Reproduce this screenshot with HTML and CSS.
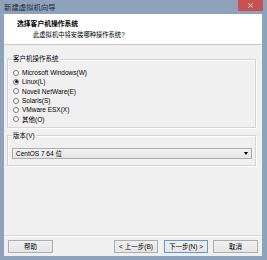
FILE: index.html
```
<!DOCTYPE html>
<html lang="zh-CN">
<head>
    <meta charset="UTF-8">
    <meta name="viewport" content="width=device-width, initial-scale=1.0">
    <title>新建虚拟机向导</title>
    <link rel="stylesheet" href="styles.css">
</head>
<body>
    <div class="window">
        <div class="title-bar">
            <span class="title-text">新建虚拟机向导</span>
            <span class="close-btn">
                <svg width="5" height="5" viewBox="0 0 5 5"><path d="M0.5 0.5 L4.5 4.5 M4.5 0.5 L0.5 4.5" stroke="#fff" stroke-width="1"/></svg>
            </span>
        </div>
        <div class="client">
            <div class="header">
                <div class="header-title">选择客户机操作系统</div>
                <div class="header-sub">此虚拟机中将安装哪种操作系统?</div>
            </div>
            <div class="content">
                <fieldset class="group group-os">
                    <legend>客户机操作系统</legend>
                    <div class="radio-row"><span class="radio"></span>Microsoft Windows(W)</div>
                    <div class="radio-row"><span class="radio checked"></span>Linux(L)</div>
                    <div class="radio-row"><span class="radio"></span>Novell NetWare(E)</div>
                    <div class="radio-row"><span class="radio"></span>Solaris(S)</div>
                    <div class="radio-row"><span class="radio"></span>VMware ESX(X)</div>
                    <div class="radio-row"><span class="radio"></span>其他(O)</div>
                </fieldset>
                <fieldset class="group group-ver">
                    <legend>版本(V)</legend>
                    <div class="select">
                        <span>CentOS 7 64 位</span>
                        <span class="select-arrow"></span>
                    </div>
                </fieldset>
                <div class="spacer"></div>
                <div class="footer">
                    <button class="btn">帮助</button>
                    <button class="btn btn-prev">&lt; 上一步(B)</button>
                    <button class="btn btn-next">下一步(N) &gt;</button>
                    <button class="btn btn-cancel">取消</button>
                </div>
            </div>
        </div>
    </div>
</body>
</html>
```

FILE: styles.css
```
body {
    margin: 0;
    padding: 0;
    font-family: "Liberation Sans", "Noto Sans CJK SC", sans-serif;
    font-size: 6.5px;
    color: #000000;
}

.window {
    width: 267px;
    height: 260px;
    box-sizing: border-box;
    background: #8fa2bb;
    padding: 0 5px 4px 4px;
    display: flex;
    flex-direction: column;
}

.title-bar {
    height: 14px;
    display: flex;
    align-items: flex-start;
    justify-content: space-between;
}

.title-text {
    font-family: "Noto Sans CJK SC", sans-serif;
    font-size: 7.4px;
    line-height: 14px;
    color: #1e2a3a;
}

.close-btn {
    width: 25px;
    height: 11px;
    margin-right: -1px;
    background: #c75050;
    display: flex;
    align-items: center;
    justify-content: center;
}

.close-btn svg {
    display: block;
}

.client {
    flex: 1;
    display: flex;
    flex-direction: column;
    background: #f0f0f0;
}

.header {
    background: #ffffff;
    border-bottom: 1px solid #c9c9c9;
    padding: 5px 0 0 13px;
    height: 25px;
}

.header-title {
    font-weight: 700;
    line-height: 10px;
    font-size: 6.8px;
}

.header-sub {
    margin: 1px 0 0 16px;
    line-height: 10px;
    font-size: 6.3px;
}

.content {
    flex: 1;
    display: flex;
    flex-direction: column;
}

.group {
    margin: 0 6px 0 3px;
    border: 1px solid #d5d5d5;
    box-shadow: inset 1px 1px 0 #ffffff, 1px 1px 0 #ffffff;
    padding: 0 3px 0 4px;
    min-width: 0;
}

.group legend {
    padding: 0 1px;
    line-height: 8px;
}

.group-os {
    margin-top: 10px;
    padding-top: 5px;
    padding-bottom: 3px;
}

.group-ver {
    margin-top: 4px;
    padding-top: 4px;
    padding-bottom: 6px;
}

.radio-row {
    height: 9.3px;
    display: flex;
    align-items: center;
    white-space: nowrap;
}

.radio {
    width: 6px;
    height: 6px;
    box-sizing: border-box;
    border: 1px solid #7a7a7a;
    border-radius: 50%;
    background: #ffffff;
    margin: 0 3px 0 1px;
    display: flex;
    align-items: center;
    justify-content: center;
}

.radio.checked::after {
    content: "";
    width: 3px;
    height: 3px;
    border-radius: 50%;
    background: #1a1a1a;
}

.select {
    margin-top: 4px;
    height: 11px;
    box-sizing: border-box;
    border: 1px solid #adadad;
    background: linear-gradient(#f2f2f2, #e5e5e5);
    display: flex;
    align-items: center;
    justify-content: space-between;
    padding: 0 3px 0 3px;
}

.select-arrow {
    width: 0;
    height: 0;
    border-left: 2.5px solid transparent;
    border-right: 2.5px solid transparent;
    border-top: 3px solid #000000;
}

.spacer {
    flex: 1;
}

.footer {
    border-top: 1px solid #d6d6d6;
    box-shadow: inset 0 1px 0 #ffffff;
    padding: 4px 4px 3px 4px;
    display: flex;
}

.btn {
    font: inherit;
    height: 13px;
    width: 45px;
    padding: 0;
    margin: 0;
    border: 1px solid #adadad;
    background: linear-gradient(#f0f0f0, #e5e5e5);
    color: #000000;
    line-height: 11px;
}

.btn-prev {
    margin-left: auto;
    width: 44px;
}

.btn-next {
    width: 44px;
    margin-left: 6px;
    border-color: #5a9ad6;
}

.btn-cancel {
    margin-left: 5px;
}
```
